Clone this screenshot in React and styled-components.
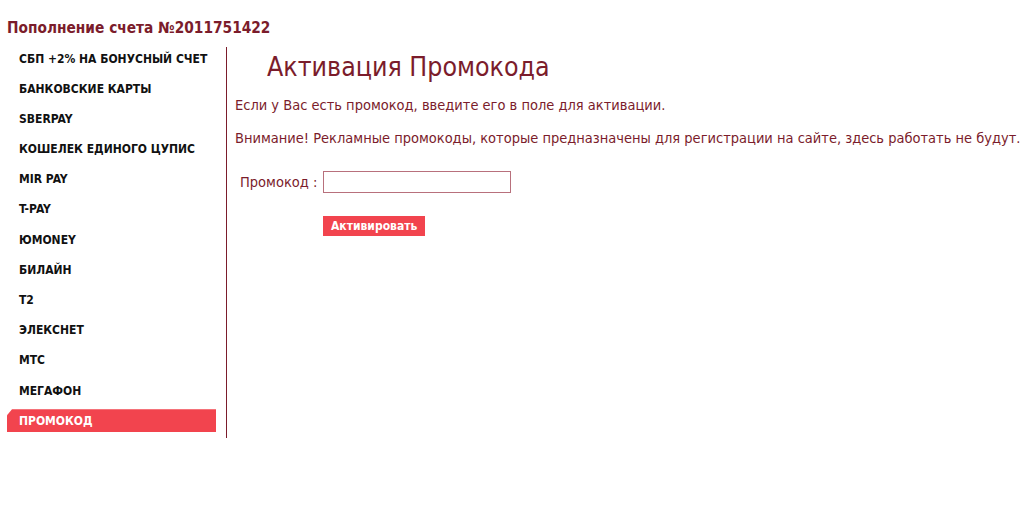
import React from 'react';
import styled, { createGlobalStyle } from 'styled-components';

const methods = [
    "СБП +2% на бонусный счет",
    "Банковские карты",
    "SberPay",
    "Кошелек Единого ЦУПИС",
    "Mir Pay",
    "T-Pay",
    "ЮMoney",
    "Билайн",
    "T2",
    "Элекснет",
    "МТС",
    "Мегафон",
    "Промокод"
];

const GlobalStyle = createGlobalStyle`
    body {
        margin: 0;
        background: #ffffff;
        font-family: Tahoma, "DejaVu Sans Condensed", "DejaVu Sans", sans-serif;
    }
`;

const Page = styled.div`
    width: 1024px;
    height: 512px;
    padding: 18px 0 0 7px;
    box-sizing: border-box;
`;

const Header = styled.h2`
    margin: 0;
    font-size: 15.3px;
    font-weight: bold;
    color: #7b1c2b;
    line-height: 20px;
`;

const Layout = styled.div`
    display: flex;
    margin-top: 9px;
`;

const SideBar = styled.ul`
    list-style: none;
    margin: 0;
    padding: 0;
    width: 219px;
    border-right: 1px solid #7b1c2b;
    padding-bottom: 6px;
`;

const Item = styled.li`
    height: 23px;
    margin-top: ${props => props.first ? '0' : '7.2px'};
    padding-left: 12px;
    margin-right: 10px;
    display: flex;
    align-items: center;
    font-size: 12px;
    font-weight: bold;
    text-transform: uppercase;
    color: ${props => props.active ? '#ffffff' : '#111111'};
    background: ${props => props.active ? '#f2444e' : 'transparent'};
    clip-path: ${props => props.active ? 'polygon(5px 0, 100% 0, 100% 100%, 0 100%, 0 6px)' : 'none'};
    cursor: pointer;
`;

const Content = styled.div`
    flex: 1;
    padding: 3px 0 0 8px;
    color: #7b1c2b;
`;

const Title = styled.h1`
    margin: 0 0 0 32px;
    font-size: 26.5px;
    font-weight: normal;
    line-height: 34px;
`;

const Text = styled.p`
    margin: ${props => props.first ? '12px' : '15px'} 0 0;
    font-size: 14.5px;
    line-height: 18px;
`;

const FormRow = styled.div`
    display: flex;
    align-items: center;
    margin: 24px 0 0 5px;
    font-size: 14.5px;
`;

const Label = styled.label`
    width: 83px;
`;

const Input = styled.input`
    width: 188px;
    height: 22px;
    box-sizing: border-box;
    border: 1px solid #b8707c;
    outline: none;
    padding: 0 4px;
`;

const Button = styled.button`
    margin: 23px 0 0 88px;
    height: 20px;
    padding: 0 8px;
    border: none;
    background: #f2444e;
    color: #ffffff;
    font-family: inherit;
    font-size: 12px;
    font-weight: bold;
    cursor: pointer;
`;

export default function App() {
    return (
        <Page>
            <GlobalStyle />
            <Header>Пополнение счета №2011751422</Header>
            <Layout>
                <SideBar>
                    {methods.map((m, i) => (
                        <Item key={m} first={i === 0} active={m === "Промокод"}>{m}</Item>
                    ))}
                </SideBar>
                <Content>
                    <Title>Активация Промокода</Title>
                    <Text first>Если у Вас есть промокод, введите его в поле для активации.</Text>
                    <Text>Внимание! Рекламные промокоды, которые предназначены для регистрации на сайте, здесь работать не будут.</Text>
                    <FormRow>
                        <Label>Промокод :</Label>
                        <Input type="text" />
                    </FormRow>
                    <Button>Активировать</Button>
                </Content>
            </Layout>
        </Page>
    );
}
